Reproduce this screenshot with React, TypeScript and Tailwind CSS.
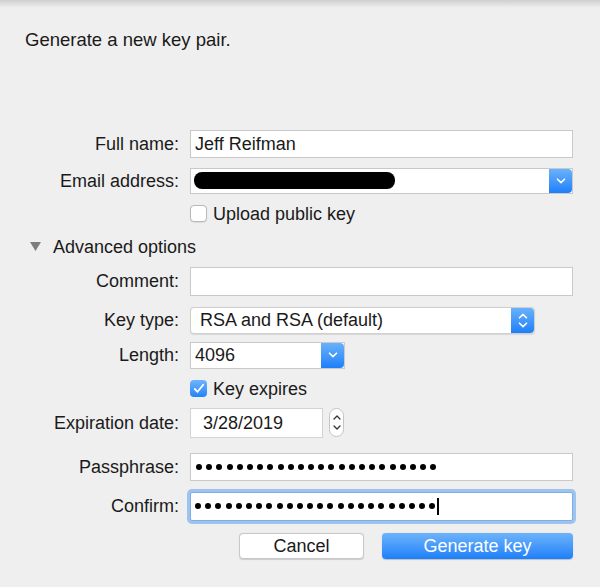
import React from "react"

const font = { fontFamily: '"Liberation Sans", Arial, sans-serif' }

function Dots({ count }: { count: number }) {
  return (
    <div className="flex items-center gap-[4.2px]">
      {Array.from({ length: count }).map((_, i) => (
        <span key={i} className="block h-[6px] w-[6px] rounded-full bg-black" />
      ))}
    </div>
  )
}

function Chevron({ up = false }: { up?: boolean }) {
  return (
    <svg width="10" height="6" viewBox="0 0 10 6" className={up ? "rotate-180" : ""}>
      <path d="M1.5 1.2 L5 4.6 L8.5 1.2" fill="none" stroke="white" strokeWidth="1.6" strokeLinecap="round" strokeLinejoin="round" />
    </svg>
  )
}

function BlueTab({ double = false }: { double?: boolean }) {
  return (
    <div className="flex w-[23px] shrink-0 flex-col items-center justify-center gap-[3px] rounded-r-[4px] bg-gradient-to-b from-[#68b1fb] to-[#1b7ff9]">
      {double ? (
        <>
          <Chevron up />
          <Chevron />
        </>
      ) : (
        <Chevron />
      )}
    </div>
  )
}

function Checkbox({ checked = false }: { checked?: boolean }) {
  if (checked) {
    return (
      <span className="flex h-[17px] w-[17px] items-center justify-center rounded-[4px] bg-gradient-to-b from-[#6db4fb] to-[#1e83f9]">
        <svg width="12" height="11" viewBox="0 0 12 11">
          <path d="M1.8 6 L4.6 8.8 L10.2 1.8" fill="none" stroke="white" strokeWidth="1.8" strokeLinecap="round" strokeLinejoin="round" />
        </svg>
      </span>
    )
  }
  return <span className="block h-[17px] w-[17px] rounded-[4px] border border-[#b9b9b9] bg-white shadow-[0_0.5px_1px_rgba(0,0,0,0.08)]" />
}

function Label({ children }: { children: React.ReactNode }) {
  return <div className="w-[180px] shrink-0 pr-[1px] text-right">{children}</div>
}

export default function App() {
  return (
    <div style={font} className="relative h-[587px] w-[600px] overflow-hidden bg-[#efefef] text-[18px] leading-none text-[#1a1a1a]">
      <div className="h-[8px] bg-gradient-to-b from-[#cfcfcf] to-[#efefef]" />

      <div className="ml-[25px] mt-[23px] text-[18.5px]">Generate a new key pair.</div>

      <div className="mt-[80px] pr-[27px]">
        {/* Full name */}
        <div className="flex items-center gap-[10px]">
          <Label>Full name:</Label>
          <div className="flex h-[28px] flex-1 items-center border border-[#c9c9c9] bg-white pl-[4px]">Jeff Reifman</div>
        </div>

        {/* Email */}
        <div className="mt-[10px] flex items-center gap-[10px]">
          <Label>Email address:</Label>
          <div className="flex h-[26px] flex-1 border border-[#c9c9c9] bg-white">
            <div className="flex flex-1 items-center pl-[3px]">
              <span className="block h-[17px] w-[201px] rounded-[8px] bg-black" />
            </div>
            <BlueTab />
          </div>
        </div>

        {/* Upload */}
        <div className="mt-[11px] flex items-center gap-[6px] pl-[190px]">
          <Checkbox />
          <span>Upload public key</span>
        </div>

        {/* Advanced */}
        <div className="mt-[15px] flex items-center gap-[12px] pl-[30px]">
          <svg width="11" height="9" viewBox="0 0 11 9">
            <path d="M0 0 H11 L5.5 9 Z" fill="#7d7d7d" />
          </svg>
          <span>Advanced options</span>
        </div>

        {/* Comment */}
        <div className="mt-[11px] flex items-center gap-[10px]">
          <Label>Comment:</Label>
          <div className="h-[29px] flex-1 border border-[#c9c9c9] bg-white" />
        </div>

        {/* Key type */}
        <div className="mt-[11px] flex items-center gap-[10px]">
          <Label>Key type:</Label>
          <div className="flex h-[27px] w-[345px] rounded-[4px] border border-[#cfcfcf] bg-white shadow-[0_0.5px_1px_rgba(0,0,0,0.1)]">
            <div className="flex flex-1 items-center pl-[9px]">RSA and RSA (default)</div>
            <BlueTab double />
          </div>
        </div>

        {/* Length */}
        <div className="mt-[8px] flex items-center gap-[10px]">
          <Label>Length:</Label>
          <div className="flex h-[27px] w-[155px] border border-[#c9c9c9] bg-white">
            <div className="flex flex-1 items-center pl-[4px]">4096</div>
            <BlueTab />
          </div>
        </div>

        {/* Key expires */}
        <div className="mt-[11px] flex items-center gap-[6px] pl-[190px]">
          <Checkbox checked />
          <span>Key expires</span>
        </div>

        {/* Expiration date */}
        <div className="mt-[10px] flex items-center gap-[10px]">
          <Label>Expiration date:</Label>
          <div className="flex h-[30px] w-[133px] items-center border border-[#d3d3d3] bg-white pl-[12px]">3/28/2019</div>
          <div className="ml-[-4px] flex h-[29px] w-[15px] flex-col items-center justify-center gap-[5px] rounded-[8px] border border-[#c4c4c4] bg-white">
            <svg width="8" height="5" viewBox="0 0 8 5">
              <path d="M1 4 L4 1 L7 4" fill="none" stroke="#333" strokeWidth="1.3" strokeLinecap="round" strokeLinejoin="round" />
            </svg>
            <svg width="8" height="5" viewBox="0 0 8 5">
              <path d="M1 1 L4 4 L7 1" fill="none" stroke="#333" strokeWidth="1.3" strokeLinecap="round" strokeLinejoin="round" />
            </svg>
          </div>
        </div>

        {/* Passphrase */}
        <div className="mt-[15px] flex items-center gap-[10px]">
          <Label>Passphrase:</Label>
          <div className="flex h-[28px] flex-1 items-center border border-[#c9c9c9] bg-white pl-[5px]">
            <Dots count={24} />
          </div>
        </div>

        {/* Confirm */}
        <div className="mt-[11px] flex items-center gap-[10px]">
          <Label>Confirm:</Label>
          <div className="flex h-[29px] flex-1 items-center rounded-[2px] border border-[#7eaee8] bg-white pl-[4px] shadow-[0_0_0_3px_#9cc4ef]">
            <Dots count={24} />
            <span className="ml-[2px] block h-[17px] w-[1.5px] bg-black" />
          </div>
        </div>

        {/* Buttons */}
        <div className="mt-[12px] flex justify-end gap-[18px]">
          <button className="h-[26px] w-[125px] rounded-[4px] border border-[#c8c8c8] bg-white text-[18px] text-[#1a1a1a] shadow-[0_0.5px_1px_rgba(0,0,0,0.15)]">
            Cancel
          </button>
          <button className="h-[26px] w-[191px] rounded-[4px] bg-gradient-to-b from-[#6cb3fa] to-[#1a7ffa] text-[18px] text-white shadow-[0_0.5px_1px_rgba(0,0,0,0.2)]">
            Generate key
          </button>
        </div>
      </div>
    </div>
  )
}
